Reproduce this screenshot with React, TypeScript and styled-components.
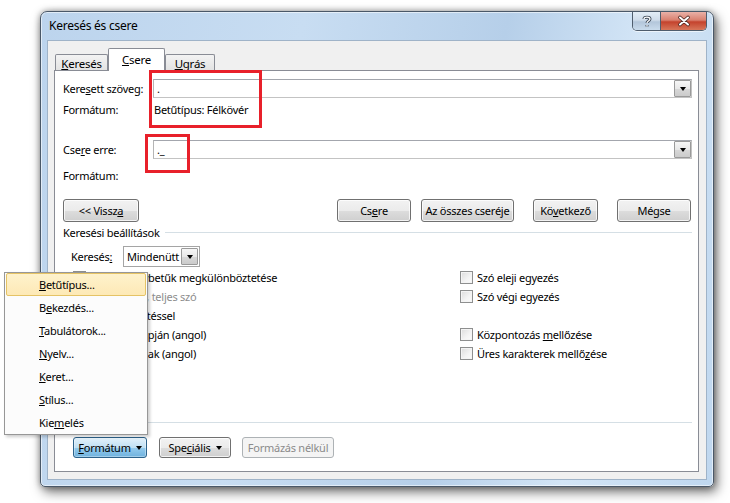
import React from 'react';
import styled, { createGlobalStyle, css } from 'styled-components';

const Global = createGlobalStyle`
  html, body { margin: 0; padding: 0; background: #fff; }
  body {
    font-family: "Segoe UI", "Noto Sans", "Open Sans", sans-serif;
    font-size: 11px;
    letter-spacing: -0.25px;
    color: #000;
    white-space: nowrap;
  }
  * { box-sizing: border-box; }
`;

const Stage = styled.div`
  position: relative;
  width: 730px;
  height: 503px;
  overflow: hidden;
  background: #fff;
  padding: 11px 0 0 40px;
`;

const Window = styled.div`
  width: 674px;
  height: 476px;
  border: 1px solid #4a5868;
  border-radius: 7px 7px 5px 5px;
  background: linear-gradient(100deg, #bcd4ed 0%, #c8ddf2 35%, #b6cfe9 62%, #d3e5f6 80%, #bfd7ef 100%);
  box-shadow: 3px 5px 12px rgba(0, 0, 0, 0.55), 0 0 6px rgba(0, 0, 0, 0.35),
    inset 0 0 0 1px rgba(255, 255, 255, 0.55);
  display: flex;
  flex-direction: column;
  padding: 0 6px 6px 6px;
`;

const TitleBar = styled.div`
  height: 28px;
  display: flex;
  align-items: flex-start;
  justify-content: space-between;
`;

const Title = styled.div`
  padding: 6px 0 0 2px;
  line-height: 16px;
  font-size: 12px;
  color: #000;
`;

const Caption = styled.div`
  display: flex;
  height: 19px;
  border: 1px solid #4f5d6d;
  border-top: none;
  border-radius: 0 0 5px 5px;
  overflow: hidden;
  box-shadow: 0 1px 0 rgba(255, 255, 255, 0.6);
`;

const CapBtn = styled.div<{ $w: number; $red?: boolean }>`
  width: ${(p) => p.$w}px;
  height: 100%;
  display: flex;
  align-items: center;
  justify-content: center;
  ${(p) =>
    p.$red
      ? css`
          background: linear-gradient(#e9b1a8 0%, #d9806f 45%, #c4432d 55%, #d7765a 100%);
        `
      : css`
          border-right: 1px solid #4f5d6d;
          background: linear-gradient(#e3edf6 0%, #cfdcea 45%, #b3c6da 55%, #c9dbec 100%);
        `}
`;

const Glyph = styled.svg`
  display: block;
  overflow: visible;
`;

const Client = styled.div`
  flex: 1;
  background: #f0f0f0;
  border: 1px solid #9fb3c8;
  display: flex;
  flex-direction: column;
  padding: 7px 7px 7px 6px;
`;

const TabRow = styled.div`
  height: 22px;
  display: flex;
  align-items: flex-end;
  padding-left: 1px;
`;

const Tab = styled.div<{ $w: number; $active?: boolean }>`
  width: ${(p) => p.$w}px;
  height: 16px;
  border: 1px solid #898c95;
  border-bottom: none;
  border-radius: 2px 2px 0 0;
  background: linear-gradient(#f3f3f3, #e3e3e3);
  display: flex;
  align-items: center;
  justify-content: center;
  padding-top: 1px;
  font-size: 11.5px;
  ${(p) =>
    p.$active &&
    css`
      position: relative;
      z-index: 1;
      height: 23px;
      margin-bottom: -1px;
      background: #fff;
      padding-bottom: 3px;
    `}
`;

const Panel = styled.div`
  flex: 1;
  background: #fff;
  border: 1px solid #898c95;
  display: flex;
  flex-direction: column;
  padding: 0 6px 0 8px;
`;

const Key = styled.u`
  text-decoration: underline;
  text-underline-offset: 1px;
`;

const FieldRow = styled.div<{ $mt: number }>`
  display: flex;
  align-items: center;
  height: 19px;
  margin-top: ${(p) => p.$mt}px;
`;

const Label = styled.div`
  width: 90px;
  flex: none;
`;

const Combo = styled.div`
  flex: 1;
  height: 19px;
  border: 1px solid #abadb3;
  border-color: #a3a6ad #c3c3c3 #c3c3c3 #b5b5b5;
  background: #fff;
  display: flex;
  align-items: center;
  justify-content: space-between;
  padding-left: 3px;
`;

const DropBtn = styled.div<{ $h: number }>`
  width: 17px;
  height: ${(p) => p.$h}px;
  border: 1px solid #9a9a9a;
  border-radius: 1px;
  background: linear-gradient(#f6f6f6 0%, #e8e8e8 50%, #d8d8d8 51%, #cbcbcb 100%);
  display: flex;
  align-items: center;
  justify-content: center;
`;

const Arrow = styled.span<{ $color?: string }>`
  width: 0;
  height: 0;
  border-left: 3.5px solid transparent;
  border-right: 3.5px solid transparent;
  border-top: 4px solid ${(p) => p.$color ?? '#000'};
`;

const InfoRow = styled.div<{ $mt: number }>`
  display: flex;
  align-items: center;
  height: 16px;
  margin-top: ${(p) => p.$mt}px;
`;

const Value = styled.div`
  padding-left: 1px;
`;

const ButtonRow = styled.div`
  display: flex;
  align-items: center;
  height: 23px;
  margin-top: 16px;
  padding-right: 1px;
`;

const RightGroup = styled.div`
  margin-left: auto;
  display: flex;
`;

const Btn = styled.div<{ $w: number; $h?: number; $ml?: number; $variant?: 'normal' | 'pressed' | 'disabled' }>`
  width: ${(p) => p.$w}px;
  height: ${(p) => p.$h ?? 23}px;
  margin-left: ${(p) => p.$ml ?? 0}px;
  border: 1px solid #707070;
  border-radius: 3px;
  display: flex;
  align-items: center;
  justify-content: center;
  gap: 5px;
  background: linear-gradient(#f2f2f2 0%, #ebebeb 50%, #dddddd 51%, #cfcfcf 100%);
  box-shadow: inset 0 0 0 1px rgba(255, 255, 255, 0.75);
  ${(p) =>
    p.$variant === 'pressed' &&
    css`
      border-color: #2c628b;
      background: linear-gradient(#e2f1fb 0%, #c0e0f4 50%, #94cbee 51%, #6fb2de 100%);
      box-shadow: inset 0 0 0 1px rgba(255, 255, 255, 0.35);
    `}
  ${(p) =>
    p.$variant === 'disabled' &&
    css`
      border-color: #adb2b5;
      background: #f4f4f4;
      color: #8b8b8b;
      box-shadow: none;
    `}
`;

const SectionHead = styled.div`
  display: flex;
  align-items: center;
  height: 16px;
  margin-top: 2px;
`;

const Rule = styled.div<{ $ml?: number }>`
  flex: 1;
  height: 1px;
  background: #d5dfe5;
  margin-left: ${(p) => p.$ml ?? 0}px;
`;

const SelectRow = styled.div`
  display: flex;
  align-items: center;
  height: 21px;
  margin-top: 6px;
  padding-left: 8px;
`;

const SelLabel = styled.div`
  width: 52px;
`;

const Select = styled.div`
  width: 77px;
  height: 21px;
  border: 1px solid #a5a5a5;
  background: #fff;
  display: flex;
  align-items: center;
  justify-content: space-between;
  padding: 0 1px 0 3px;
`;

const Options = styled.div`
  margin-top: 1px;
  padding-left: 10px;
  display: grid;
  grid-template-columns: 387px 1fr;
  grid-template-rows: repeat(5, 19px);
  grid-auto-flow: column;
`;

const Opt = styled.div<{ $disabled?: boolean }>`
  display: flex;
  align-items: center;
  gap: 4px;
  color: ${(p) => (p.$disabled ? '#8d8d8d' : '#000')};
`;

const Check = styled.span`
  width: 13px;
  height: 13px;
  flex: none;
  border: 1px solid #8e8f8f;
  background: linear-gradient(135deg, #dcdcdc 0%, #f4f4f4 60%, #fbfbfb 100%);
  box-shadow: inset 0 0 0 1px #f4f4f4;
`;

const Separator = styled.div`
  height: 1px;
  background: #d5dfe5;
  margin-top: 59px;
`;

const BottomRow = styled.div`
  display: flex;
  align-items: center;
  margin-top: 14px;
  padding-left: 10px;
`;

const Menu = styled.div`
  position: absolute;
  left: 4px;
  top: 272px;
  width: 144px;
  height: 163px;
  border: 1px solid #979797;
  background: #fcfcfc;
  box-shadow: 2px 2px 3px rgba(0, 0, 0, 0.2);
  padding: 0 1px;
  z-index: 5;
`;

const MenuItem = styled.div<{ $hot?: boolean }>`
  height: 23px;
  display: flex;
  align-items: center;
  padding-left: 32px;
  border: 1px solid transparent;
  border-radius: 2px;
  ${(p) =>
    p.$hot &&
    css`
      border-color: #e5c365;
      background: linear-gradient(#fef2cc 0%, #fde9b6 100%);
    `}
`;

const Mark = styled.div<{ $x: number; $y: number; $w: number; $h: number }>`
  position: absolute;
  left: ${(p) => p.$x}px;
  top: ${(p) => p.$y}px;
  width: ${(p) => p.$w}px;
  height: ${(p) => p.$h}px;
  border: 3px solid #e8202a;
  z-index: 4;
`;

export default function App() {
  return (
    <>
      <Global />
      <Stage>
        <Window>
          <TitleBar>
            <Title>Keresés és csere</Title>
            <Caption>
              <CapBtn $w={28}>
                <Glyph width="8" height="11" viewBox="0 0 8 11">
                  <path d="M1 3 C1 0.5 7 0.5 7 3 C7 5 4 5 4 7 M4 9 V10.5" fill="none" stroke="#3c4856" strokeWidth="3" />
                  <path d="M1 3 C1 0.5 7 0.5 7 3 C7 5 4 5 4 7 M4 9 V10.5" fill="none" stroke="#fff" strokeWidth="1.3" />
                </Glyph>
              </CapBtn>
              <CapBtn $w={45} $red>
                <Glyph width="10" height="8" viewBox="0 0 10 8">
                  <path d="M1 0.5 L9 7.5 M9 0.5 L1 7.5" stroke="#4a2520" strokeWidth="3.6" strokeLinecap="round" />
                  <path d="M1 0.5 L9 7.5 M9 0.5 L1 7.5" stroke="#fff" strokeWidth="2" strokeLinecap="round" />
                </Glyph>
              </CapBtn>
            </Caption>
          </TitleBar>
          <Client>
            <TabRow>
              <Tab $w={53}><span><Key>K</Key>eresés</span></Tab>
              <Tab $w={57} $active><span><Key>C</Key>sere</span></Tab>
              <Tab $w={50}><span><Key>U</Key>grás</span></Tab>
            </TabRow>
            <Panel>
              <FieldRow $mt={8}>
                <Label>Kere<Key>s</Key>ett szöveg:</Label>
                <Combo>
                  <span>.</span>
                  <DropBtn $h={17}><Arrow /></DropBtn>
                </Combo>
              </FieldRow>
              <InfoRow $mt={3}>
                <Label>Formátum:</Label>
                <Value>Betűtípus: Félkövér</Value>
              </InfoRow>
              <FieldRow $mt={23}>
                <Label>Cse<Key>r</Key>e erre:</Label>
                <Combo>
                  <span>._</span>
                  <DropBtn $h={17}><Arrow /></DropBtn>
                </Combo>
              </FieldRow>
              <InfoRow $mt={8}>
                <Label>Formátum:</Label>
              </InfoRow>
              <ButtonRow>
                <Btn $w={76}><span>&lt;&lt; Vissz<Key>a</Key></span></Btn>
                <RightGroup>
                  <Btn $w={74}><span>Cs<Key>e</Key>re</span></Btn>
                  <Btn $w={93} $ml={10}><span>Az összes cseré<Key>j</Key>e</span></Btn>
                  <Btn $w={65} $ml={19}><span>Kö<Key>v</Key>etkező</span></Btn>
                  <Btn $w={74} $ml={19}><span>Mégse</span></Btn>
                </RightGroup>
              </ButtonRow>
              <SectionHead>
                <span>Keresési beállítások</span>
                <Rule $ml={5} />
              </SectionHead>
              <SelectRow>
                <SelLabel>Keresés<Key>:</Key></SelLabel>
                <Select>
                  <span>Mindenütt</span>
                  <DropBtn $h={17}><Arrow /></DropBtn>
                </Select>
              </SelectRow>
              <Options>
                <Opt><Check /><span>Kis- és nagybetűk megkülönböztetése</span></Opt>
                <Opt $disabled><Check /><span>Csak önálló, teljes szó</span></Opt>
                <Opt><Check /><span>A helyettesítéssel</span></Opt>
                <Opt><Check /><span>Hasonló alapján (angol)</span></Opt>
                <Opt><Check /><span>Az összes alak (angol)</span></Opt>
                <Opt><Check /><span>Szó ele<Key>j</Key>i egyezés</span></Opt>
                <Opt><Check /><span>Szó vé<Key>g</Key>i egyezés</span></Opt>
                <Opt />
                <Opt><Check /><span>Központozás <Key>m</Key>ellőzése</span></Opt>
                <Opt><Check /><span>Üres karakterek mellő<Key>z</Key>ése</span></Opt>
              </Options>
              <Separator />
              <BottomRow>
                <Btn $w={74} $h={21} $variant="pressed"><span><Key>F</Key>ormátum</span><Arrow /></Btn>
                <Btn $w={72} $h={21} $ml={12}><span>Spe<Key>c</Key>iális</span><Arrow /></Btn>
                <Btn $w={92} $h={21} $ml={11} $variant="disabled"><span>Formázás nélkül</span></Btn>
              </BottomRow>
            </Panel>
          </Client>
        </Window>
        <Mark $x={149} $y={70} $w={113} $h={58} />
        <Mark $x={145} $y={134} $w={45} $h={39} />
        <Menu>
          <MenuItem $hot><span><Key>B</Key>etűtípus...</span></MenuItem>
          <MenuItem><span>B<Key>e</Key>kezdés...</span></MenuItem>
          <MenuItem><span><Key>T</Key>abulátorok...</span></MenuItem>
          <MenuItem><span><Key>N</Key>yelv...</span></MenuItem>
          <MenuItem><span><Key>K</Key>eret...</span></MenuItem>
          <MenuItem><span><Key>S</Key>tílus...</span></MenuItem>
          <MenuItem><span>Kie<Key>m</Key>elés</span></MenuItem>
        </Menu>
      </Stage>
    </>
  );
}
